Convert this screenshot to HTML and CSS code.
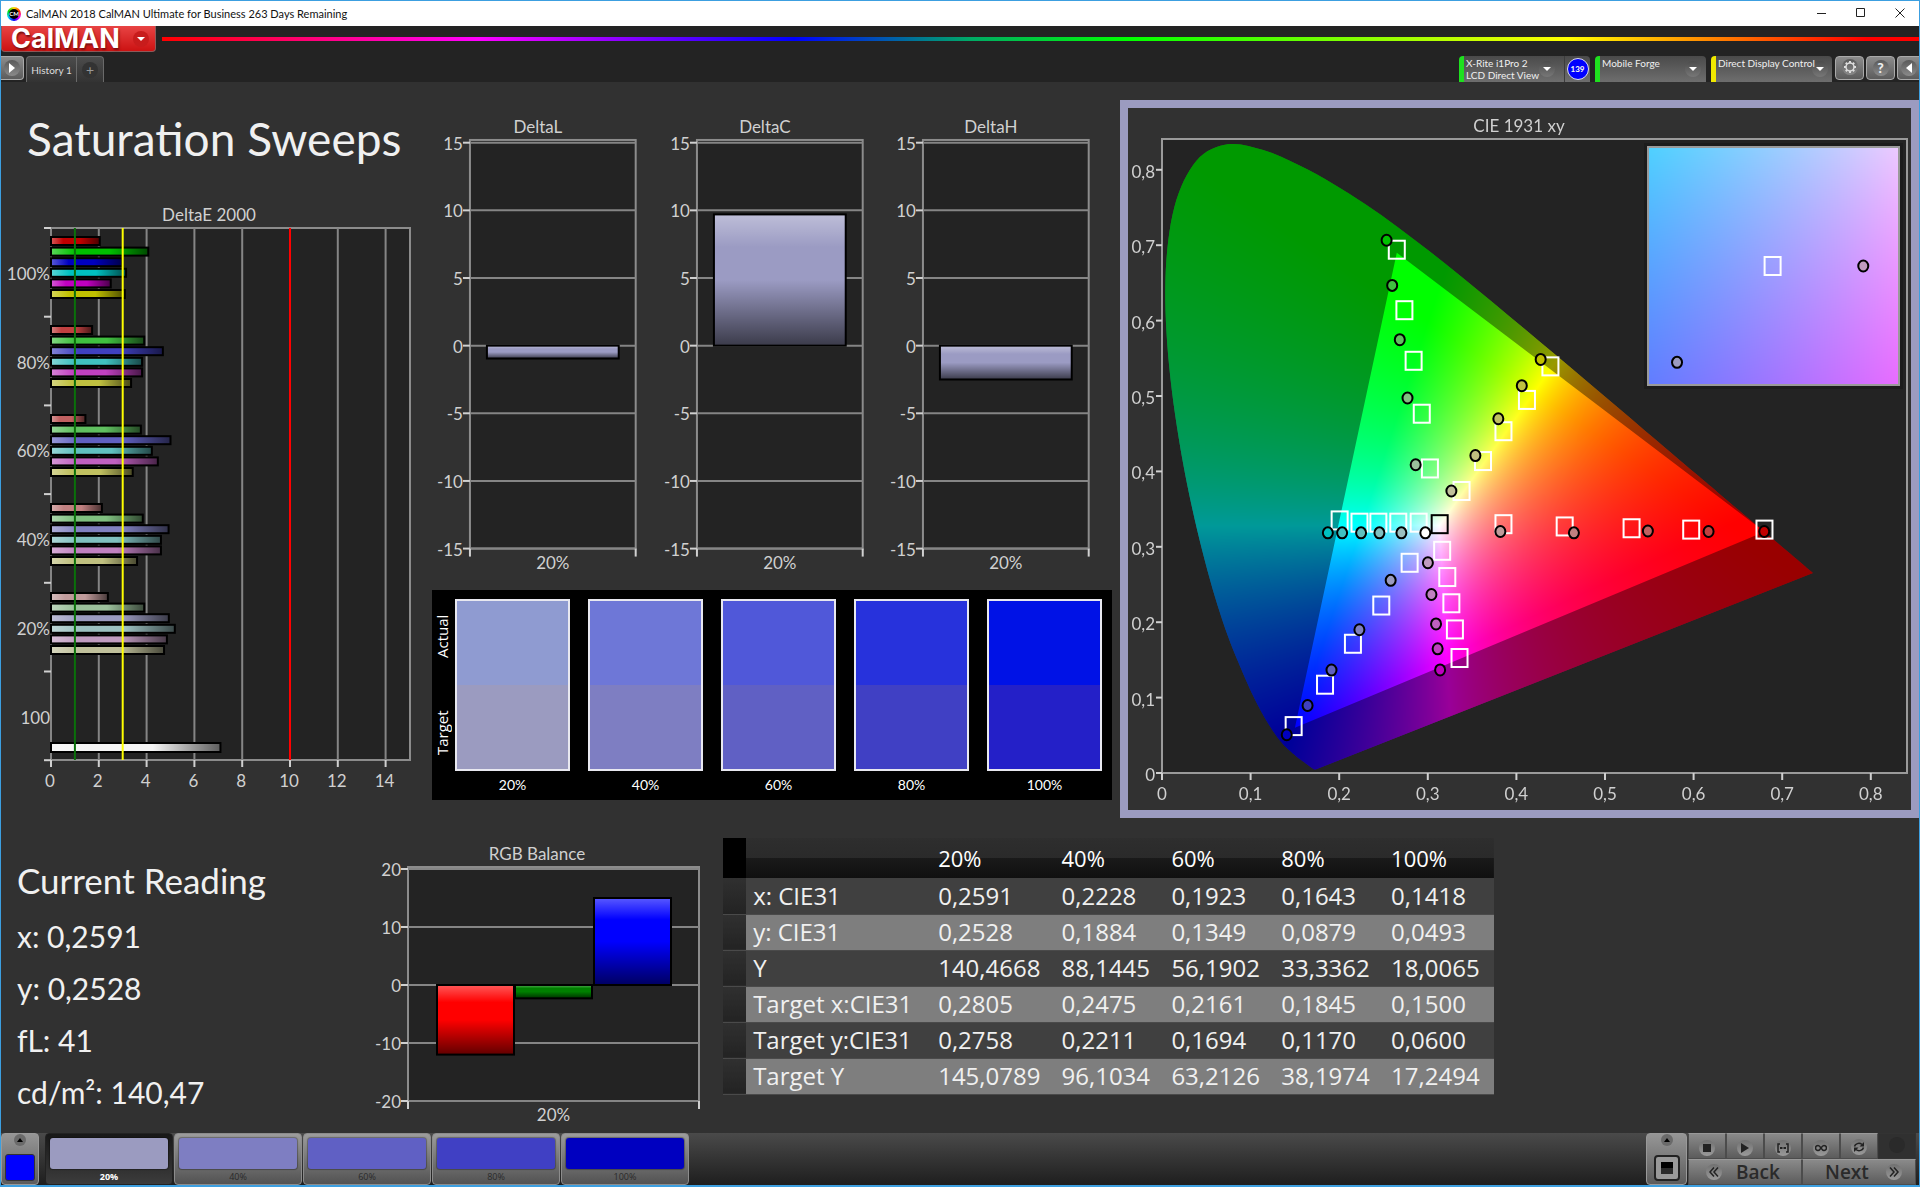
FILE: index.html
```html
<!DOCTYPE html>
<html lang="en">
<head>
  <meta charset="UTF-8" />
  <title>CalMAN 2018 CalMAN Ultimate for Business 263 Days Remaining</title>
  <link rel="stylesheet" href="styles.css">
</head>
<body>
  <!-- Shared bar shading -->
  <svg class="defs" width="0" height="0" aria-hidden="true">
    <defs>
      <linearGradient id="shadeV" x1="0" y1="0" x2="0" y2="1">
        <stop offset="0" stop-color="#fff" stop-opacity="0.35" />
        <stop offset="0.25" stop-color="#fff" stop-opacity="0" />
        <stop offset="0.5" stop-color="#000" stop-opacity="0" />
        <stop offset="1" stop-color="#000" stop-opacity="0.62" />
      </linearGradient>
      <linearGradient id="shadeH" x1="0" y1="0" x2="1" y2="0">
        <stop offset="0" stop-color="#fff" stop-opacity="0.35" />
        <stop offset="0.25" stop-color="#fff" stop-opacity="0" />
        <stop offset="0.6" stop-color="#000" stop-opacity="0" />
        <stop offset="1" stop-color="#000" stop-opacity="0.62" />
      </linearGradient>
    </defs>
  </svg>

  <div class="window">
    <div class="titlebar">
      <span class="app-icon"><span>CM</span></span>
      <span class="app-title">CalMAN 2018 CalMAN Ultimate for Business 263 Days Remaining</span>
      <div class="window-buttons">
        <button type="button" aria-label="Minimize"><svg width="10" height="10" viewBox="0 0 10 10"><path d="M0 5.5h9" /></svg></button>
        <button type="button" aria-label="Maximize"><svg width="10" height="10" viewBox="0 0 10 10"><path d="M0.5 0.5h8v8h-8z" /></svg></button>
        <button type="button" aria-label="Close"><svg width="10" height="10" viewBox="0 0 10 10"><path d="M0.5 0.5l9 9M9.5 0.5l-9 9" /></svg></button>
      </div>
    </div>

    <header class="toolbar">
      <div class="brand-row">
        <button type="button" class="brand">CalMAN <span class="knob"><svg width="8" height="4" viewBox="0 0 8 4"><path d="M0 0h8L4 4z" /></svg></span></button>
        <div class="rainbow"></div>
      </div>
      <div class="tab-row">
        <button type="button" class="key key-start" aria-label="Show panel"><span class="knob"><svg width="6" height="10" viewBox="0 0 6 10"><path d="M0 0l6 5-6 5z" /></svg></span></button>
        <div class="tabs">
          <button type="button" class="tab">History 1</button>
          <button type="button" class="tab tab-add" aria-label="Add history"><span class="knob">+</span></button>
        </div>
        <div class="devices">
          <div class="device device-meter ok">
            <button type="button" class="device-name">X-Rite i1Pro 2<br>LCD Direct View</button>
            <span class="knob"><svg width="8" height="4" viewBox="0 0 8 4"><path d="M0 0h8L4 4z" /></svg></span>
            <span class="badge-cell"><span class="badge">139</span></span>
          </div>
          <div class="device device-source ok">
            <select aria-label="Source"><option>Mobile Forge</option></select>
            <span class="knob"><svg width="8" height="4" viewBox="0 0 8 4"><path d="M0 0h8L4 4z" /></svg></span>
          </div>
          <div class="device device-display warn">
            <select aria-label="Display"><option>Direct Display Control</option></select>
            <span class="knob"><svg width="8" height="4" viewBox="0 0 8 4"><path d="M0 0h8L4 4z" /></svg></span>
          </div>
          <button type="button" class="key" aria-label="Settings"><span class="knob"><svg width="14" height="14" viewBox="0 0 14 14"><circle cx="7" cy="7" r="4" fill="none" stroke="#ddd" stroke-width="1.5" /><path d="M7 1v2M7 11v2M1 7h2M11 7h2M2.8 2.8l1.4 1.4M9.8 9.8l1.4 1.4M11.2 2.8L9.8 4.2M4.2 9.8l-1.4 1.4" stroke="#ddd" stroke-width="2" /></svg></span></button>
          <button type="button" class="key" aria-label="Help"><span class="knob">?</span></button>
          <button type="button" class="key key-end" aria-label="Collapse"><span class="knob"><svg width="6" height="10" viewBox="0 0 6 10"><path d="M6 0L0 5l6 5z" /></svg></span></button>
        </div>
      </div>
    </header>

    <main>
      <section class="sweeps">
        <div class="col-error">
          <h1>Saturation Sweeps</h1>
          <svg id="deltaE" class="chart" viewBox="0 0 431 600" role="img" aria-label="DeltaE 2000"></svg>
        </div>

        <div class="col-delta">
          <div class="delta-charts">
            <svg id="deltaL" class="chart" viewBox="0 0 227 470" role="img" aria-label="DeltaL"></svg>
            <svg id="deltaC" class="chart" viewBox="0 0 227 470" role="img" aria-label="DeltaC"></svg>
            <svg id="deltaH" class="chart" viewBox="0 0 227 470" role="img" aria-label="DeltaH"></svg>
          </div>
          <div class="swatches">
            <div class="swatch-side"><span>Actual</span><span>Target</span></div>
            <figure><div class="actual a20"></div><div class="target t20"></div><figcaption>20%</figcaption></figure>
            <figure><div class="actual a40"></div><div class="target t40"></div><figcaption>40%</figcaption></figure>
            <figure><div class="actual a60"></div><div class="target t60"></div><figcaption>60%</figcaption></figure>
            <figure><div class="actual a80"></div><div class="target t80"></div><figcaption>80%</figcaption></figure>
            <figure><div class="actual a100"></div><div class="target t100"></div><figcaption>100%</figcaption></figure>
          </div>
        </div>

        <div class="cie">
          <canvas id="cieCanvas" width="783" height="702"></canvas>
          <svg id="cieChart" class="chart" viewBox="0 0 783 702" role="img" aria-label="CIE 1931 xy"></svg>
        </div>
      </section>

      <section class="details">
        <div class="reading">
          <h2>Current Reading</h2>
          <p>x: 0,2591</p>
          <p>y: 0,2528</p>
          <p>fL: 41</p>
          <p>cd/m²: 140,47</p>
        </div>

        <svg id="rgbBalance" class="chart" viewBox="0 0 362 290" role="img" aria-label="RGB Balance"></svg>

        <table>
          <colgroup>
            <col class="c-gutter"><col class="c-name"><col class="c-first"><col><col><col><col>
          </colgroup>
          <thead>
            <tr><td></td><th></th><th>20%</th><th>40%</th><th>60%</th><th>80%</th><th>100%</th></tr>
          </thead>
          <tbody>
            <tr><td></td><th>x: CIE31</th><td>0,2591</td><td>0,2228</td><td>0,1923</td><td>0,1643</td><td>0,1418</td></tr>
            <tr><td></td><th>y: CIE31</th><td>0,2528</td><td>0,1884</td><td>0,1349</td><td>0,0879</td><td>0,0493</td></tr>
            <tr><td></td><th>Y</th><td>140,4668</td><td>88,1445</td><td>56,1902</td><td>33,3362</td><td>18,0065</td></tr>
            <tr><td></td><th>Target x:CIE31</th><td>0,2805</td><td>0,2475</td><td>0,2161</td><td>0,1845</td><td>0,1500</td></tr>
            <tr><td></td><th>Target y:CIE31</th><td>0,2758</td><td>0,2211</td><td>0,1694</td><td>0,1170</td><td>0,0600</td></tr>
            <tr><td></td><th>Target Y</th><td>145,0789</td><td>96,1034</td><td>63,2126</td><td>38,1974</td><td>17,2494</td></tr>
          </tbody>
        </table>
      </section>
    </main>

    <footer class="patternbar">
      <button type="button" class="mini" aria-label="Current pattern">
        <span class="mini-knob"><svg width="6" height="4" viewBox="0 0 6 4"><path d="M0 4h6L3 0z" /></svg></span>
        <span class="mini-color"></span>
      </button>
      <div class="patterns">
        <button type="button" class="pattern selected"><span class="t20"></span>20%</button>
        <button type="button" class="pattern"><span class="t40"></span>40%</button>
        <button type="button" class="pattern"><span class="t60"></span>60%</button>
        <button type="button" class="pattern"><span class="t80"></span>80%</button>
        <button type="button" class="pattern"><span class="p100"></span>100%</button>
      </div>

      <button type="button" class="mini mini-stop" aria-label="Pattern window">
        <span class="mini-knob"><svg width="6" height="4" viewBox="0 0 6 4"><path d="M0 4h6L3 0z" /></svg></span>
        <span class="stop-frame"><span></span></span>
      </button>
      <div class="controls">
        <button type="button" aria-label="Stop"><span class="knob"><svg width="8" height="8" viewBox="0 0 8 8"><path d="M0 0h8v8H0z" /></svg></span></button>
        <button type="button" aria-label="Read"><span class="knob"><svg width="8" height="10" viewBox="0 0 8 10"><path d="M0 0l8 5-8 5z" /></svg></span></button>
        <button type="button" aria-label="Read series"><span class="knob"><svg width="12" height="10" viewBox="0 0 12 10"><path class="line" d="M3 1H1v8h2M9 1h2v8H9" /><path d="M3 4h2v2H3zM5.5 4h1v2h-1zM7 4h2v2H7z" /></svg></span></button>
        <button type="button" aria-label="Continuous"><span class="knob"><svg width="12" height="8" viewBox="0 0 12 8"><path class="line" d="M6 4C5 2.5 4.2 1.5 3 1.5a2.5 2.5 0 0 0 0 5C4.2 6.5 5 5.5 6 4s1.8-2.5 3-2.5a2.5 2.5 0 0 1 0 5C7.8 6.5 7 5.5 6 4z" /></svg></span></button>
        <button type="button" aria-label="Refresh"><span class="knob"><svg width="12" height="12" viewBox="0 0 12 12"><path class="line" d="M1.5 5.5C2 3 6 1 9 3.5M10.5 6.5C10 9 6 11 3 8.5" /><path d="M11 1v4.5H6.5zM1 11V6.5h4.5z" /></svg></span></button>
        <button type="button" class="off" aria-label="Disabled" disabled><span class="knob"></span></button>
        <button type="button" class="wide"><span class="knob"><svg width="10" height="10" viewBox="0 0 10 10"><path class="line" d="M5 0.5L1 5l4 4.5M9 0.5L5 5l4 4.5" /></svg></span>Back</button>
        <button type="button" class="wide wide-next">Next<span class="knob"><svg width="10" height="10" viewBox="0 0 10 10"><path class="line" d="M1 0.5L5 5 1 9.5M5 0.5L9 5 5 9.5" /></svg></span></button>
      </div>
    </footer>
  </div>

  <script>
    const SVG_NS = 'http://www.w3.org/2000/svg';

    function add(parent, tag, attrs, text) {
      const el = document.createElementNS(SVG_NS, tag);
      for (const key in attrs) el.setAttribute(key, attrs[key]);
      if (text !== undefined) el.textContent = text;
      parent.appendChild(el);
      return el;
    }

    function line(svg, x1, y1, x2, y2, cls) {
      add(svg, 'line', { x1, y1, x2, y2, class: cls });
    }

    function bar(svg, x, y, width, height, color, shade) {
      add(svg, 'rect', { x, y, width, height, fill: color });
      add(svg, 'rect', { x, y, width, height, fill: `url(#${shade})`, class: 'bar-edge' });
    }

    // Vertical bar chart with horizontal grid lines
    function columnChart(id, o) {
      const svg = document.getElementById(id);
      const y = v => o.zero - v * o.unit;
      const bottom = y(-o.max);
      add(svg, 'rect', { x: o.left, y: o.top, width: o.right - o.left, height: bottom - o.top, class: 'plot' });
      for (let v = -o.max; v <= o.max; v += o.step) {
        line(svg, o.left, y(v), o.right, y(v), 'grid');
        line(svg, o.left - 7, y(v), o.left, y(v), 'tick');
        add(svg, 'text', { x: o.left - 7, y: y(v) + 7, class: 'end' }, v);
      }
      line(svg, o.left, bottom, o.left, bottom + 8, 'tick');
      line(svg, o.right, bottom, o.right, bottom + 8, 'tick');
      o.bars.forEach(b => {
        const top = Math.min(y(b.value), o.zero);
        bar(svg, b.x, top, b.width, Math.abs(b.value * o.unit), b.color, 'shadeV');
      });
      add(svg, 'text', { x: o.titleX, y: 22 }, o.title);
      add(svg, 'text', { x: (o.left + o.right) / 2, y: bottom + 20 }, '20%');
    }

    const delta = { left: 38, right: 204, top: 29, zero: 235, unit: 13.55, max: 15, step: 5, titleX: 106 };
    [['DeltaL', -0.95], ['DeltaC', 9.7], ['DeltaH', -2.5]].forEach(([title, value]) => {
      const id = title.replace('Delta', 'delta');
      columnChart(id, { ...delta, title, bars: [{ x: 55, width: 132, value, color: '#9b9bc3' }] });
    });

    columnChart('rgbBalance', {
      left: 47, right: 338, top: 29, zero: 147, unit: 5.8, max: 20, step: 10, titleX: 176, title: 'RGB Balance',
      bars: [
        { x: 76, width: 77, value: -12, color: '#ff0000' },
        { x: 154, width: 77, value: -2.3, color: '#008000' },
        { x: 233, width: 77, value: 15, color: '#0000ff' }
      ]
    });

    // Colours of the six sweeps at each saturation level
    const LOW = { 100: 0, 80: 64, 60: 96, 40: 128, 20: 155 };
    function sweepColor(name, level) {
      const hi = 192, lo = LOW[level];
      const mask = { red: [1, 0, 0], green: [0, 1, 0], blue: [0, 0, 1], cyan: [0, 1, 1], magenta: [1, 0, 1], yellow: [1, 1, 0] }[name];
      return `rgb(${mask.map(m => (m ? hi : lo)).join(',')})`;
    }

    // DeltaE 2000
    const NAMES = ['red', 'green', 'blue', 'cyan', 'magenta', 'yellow'];
    const errors = [
      [100, [2.04, 4.07, 2.98, 3.14, 2.5, 3.09]],
      [80, [1.72, 3.9, 4.68, 3.81, 3.81, 3.35]],
      [60, [1.44, 3.76, 5, 4.22, 4.47, 3.42]],
      [40, [2.13, 3.84, 4.92, 4.6, 4.6, 3.6]],
      [20, [2.38, 3.9, 4.93, 5.18, 4.85, 4.73]]
    ];
    const de = document.getElementById('deltaE');
    const deTop = 28, deBottom = 560, deRow = 88.7;
    const deX = v => 50 + v * 23.9;
    add(de, 'rect', { x: 50, y: deTop, width: 359, height: deBottom - deTop, class: 'plot' });
    for (let v = 0; v <= 14; v += 2) {
      line(de, deX(v), deTop, deX(v), deBottom, 'grid');
      line(de, deX(v), deBottom, deX(v), deBottom + 7, 'tick');
      add(de, 'text', { x: deX(v) - 1, y: deBottom + 27 }, v);
    }
    for (let i = 0; i <= 6; i++) line(de, 43, deTop + i * deRow, 50, deTop + i * deRow, 'tick');
    errors.forEach(([level, values], row) => {
      const top = deTop + 9 + row * 89;
      values.forEach((v, i) => bar(de, 50, top + i * 10.6, v * 23.9, 8, sweepColor(NAMES[i], level), 'shadeH'));
      add(de, 'text', { x: 49, y: 80 + row * deRow, class: 'end' }, level + '%');
    });
    bar(de, 50, 543, 7.09 * 23.9, 9, '#f4f4f4', 'shadeH');
    add(de, 'text', { x: 49, y: 524, class: 'end' }, '100');
    line(de, deX(1), deTop, deX(1), deBottom, 'limit-good');
    line(de, deX(3), deTop, deX(3), deBottom, 'limit-warn');
    line(de, deX(10), deTop, deX(10), deBottom, 'limit-bad');
    add(de, 'text', { x: 208, y: 21 }, 'DeltaE 2000');

    // CIE 1931 diagram
    const cx = x => 34 + x * 886;
    const cy = y => 665 - y * 754;
    const inset = { x: 520, y: 39, w: 251, h: 238, x0: 0.2524, x1: 0.3086, y0: 0.2474, y1: 0.3042 };
    const ix = x => inset.x + (x - inset.x0) / (inset.x1 - inset.x0) * inset.w;
    const iy = y => inset.y + (inset.y1 - y) / (inset.y1 - inset.y0) * inset.h;

    const LOCUS = [
      [.1741, .0050], [.1733, .0048], [.1714, .0051], [.1689, .0069], [.1644, .0109], [.1566, .0177], [.1510, .0227],
      [.1440, .0297], [.1355, .0399], [.1241, .0578], [.1096, .0868], [.0913, .1327], [.0687, .2007], [.0454, .2950],
      [.0235, .4127], [.0082, .5384], [.0039, .6548], [.0139, .7502], [.0389, .8120], [.0743, .8338], [.1142, .8262],
      [.1547, .8059], [.1929, .7816], [.2296, .7543], [.2658, .7243], [.3016, .6923], [.3373, .6589], [.3731, .6245],
      [.4087, .5896], [.4441, .5547], [.4788, .5202], [.5125, .4866], [.5448, .4544], [.5752, .4242], [.6029, .3965],
      [.6270, .3725], [.6658, .3340], [.6915, .3083], [.7140, .2859], [.7347, .2653]
    ];
    const GAMUT = [[.68, .32], [.265, .69], [.15, .06]];

    function xyToRgb(x, y) {
      const X = x / y, Z = (1 - x - y) / y;
      const rgb = [
        3.2406 * X - 1.5372 - 0.4986 * Z,
        -0.9689 * X + 1.8758 + 0.0415 * Z,
        0.0557 * X - 0.2040 + 1.0570 * Z
      ].map(c => Math.max(c, 0));
      const max = Math.max(...rgb);
      return rgb.map(c => c / max * 255);
    }

    // Canvas filled with the chromaticity colour of every pixel
    function colorField(width, height, toX, toY) {
      const canvas = document.createElement('canvas');
      canvas.width = width;
      canvas.height = height;
      const c = canvas.getContext('2d');
      const img = c.createImageData(width, height);
      for (let j = 0; j < height; j++) {
        for (let i = 0; i < width; i++) {
          const [r, g, b] = xyToRgb(toX(i), Math.max(toY(j), 0.001));
          img.data.set([r, g, b, 255], (j * width + i) * 4);
        }
      }
      c.putImageData(img, 0, 0);
      return canvas;
    }

    const ctx = document.getElementById('cieCanvas').getContext('2d');
    ctx.fillStyle = '#232323';
    ctx.fillRect(34, 31, 745, 634);

    // Smooth curve through the locus points
    const locus = new Path2D();
    locus.moveTo(cx(LOCUS[0][0]), cy(LOCUS[0][1]));
    for (let i = 0; i < LOCUS.length - 1; i++) {
      const p1 = LOCUS[i], p2 = LOCUS[i + 1];
      const p0 = LOCUS[i - 1] || p1, p3 = LOCUS[i + 2] || p2;
      locus.bezierCurveTo(
        cx(p1[0] + (p2[0] - p0[0]) / 6), cy(p1[1] + (p2[1] - p0[1]) / 6),
        cx(p2[0] - (p3[0] - p1[0]) / 6), cy(p2[1] - (p3[1] - p1[1]) / 6),
        cx(p2[0]), cy(p2[1]));
    }
    locus.closePath();

    // Darken everything outside the display gamut
    const outside = new Path2D();
    outside.rect(0, 0, 783, 702);
    GAMUT.forEach(([x, y], i) => (i ? outside.lineTo(cx(x), cy(y)) : outside.moveTo(cx(x), cy(y))));
    outside.closePath();

    ctx.save();
    ctx.clip(locus);
    ctx.drawImage(colorField(745, 634, i => i / 886, j => (634 - j) / 754), 34, 31);
    ctx.fillStyle = 'rgba(0, 0, 0, 0.4)';
    ctx.fill(outside, 'evenodd');
    ctx.restore();

    ctx.fillStyle = '#1c1c1c';
    ctx.fillRect(inset.x - 4, inset.y - 4, inset.w + 8, inset.h + 8);
    ctx.drawImage(colorField(inset.w, inset.h,
      i => inset.x0 + i / inset.w * (inset.x1 - inset.x0),
      j => inset.y1 - j / inset.h * (inset.y1 - inset.y0)), inset.x, inset.y);

    const cie = document.getElementById('cieChart');
    add(cie, 'rect', { x: 34, y: 31, width: 745, height: 634, class: 'frame' });
    add(cie, 'rect', { x: inset.x, y: inset.y, width: inset.w, height: inset.h, class: 'frame' });
    add(cie, 'text', { x: 391, y: 24 }, 'CIE 1931 xy');
    for (let i = 0; i <= 8; i++) {
      const label = i ? '0,' + i : '0';
      line(cie, cx(i / 10), 665, cx(i / 10), 672, 'tick');
      line(cie, 28, cy(i / 10), 34, cy(i / 10), 'tick');
      add(cie, 'text', { x: cx(i / 10), y: 692 }, label);
      add(cie, 'text', { x: 27, y: cy(i / 10) + 8, class: 'end' }, label);
    }

    const TARGETS = [
      [.265, .694], [.2736, .6138], [.284, .5467], [.2932, .4765], [.3024, .4039],
      [.4384, .5393], [.4119, .4948], [.3854, .4533], [.3623, .4137], [.3381, .374],
      [.2005, .335], [.2229, .332], [.2442, .332], [.2667, .332], [.2897, .332],
      [.3854, .33], [.4545, .327], [.53, .3246], [.5973, .3228], [.68, .3228],
      [.3162, .2947], [.322, .2599], [.3266, .2251], [.3306, .1904], [.3358, .1525],
      [.2795, .2788], [.2475, .2221], [.2155, .1714], [.184, .1171], [.1486, .0622]
    ];
    // Measured points, from 100% down to 20%
    const MEASURED = {
      green: [[.2535, .7065], [.2598, .6467], [.2684, .5747], [.2771, .4973], [.2863, .4088]],
      yellow: [[.4274, .5485], [.4061, .5137], [.3796, .4698], [.3537, .421], [.3266, .374]],
      cyan: [[.1872, .3185], [.2033, .3185], [.2247, .3185], [.2454, .3185], [.2702, .3185]],
      red: [[.6797, .3203], [.6169, .3203], [.5484, .3209], [.4649, .3185], [.3819, .3203]],
      magenta: [[.3139, .1367], [.3111, .1647], [.3093, .1977], [.3041, .2367], [.3001, .2788]],
      blue: [[.1408, .0508], [.1643, .0895], [.1913, .1365], [.2228, .19], [.2581, .2555]]
    };

    function target(x, y, cls) {
      add(cie, 'rect', { x: x - 8, y: y - 9, width: 16, height: 18, class: cls });
    }
    function dot(x, y, fill) {
      add(cie, 'ellipse', { cx: x, cy: y, rx: 5, ry: 5.5, fill, class: 'dot' });
    }

    TARGETS.forEach(([x, y]) => target(cx(x), cy(y), 'target-box'));
    target(cx(.3134), cy(.33), 'target-box white-point');
    dot(cx(.2972), cy(.3185), '#fff');
    for (const name in MEASURED) {
      MEASURED[name].forEach(([x, y], i) => dot(cx(x), cy(y), sweepColor(name, 100 - i * 20)));
    }
    target(ix(.2803), iy(.2758), 'target-box');
    dot(ix(.2589), iy(.2528), sweepColor('blue', 20));
    dot(ix(.3006), iy(.2758), sweepColor('magenta', 20));
  </script>
</body>
</html>
```
FILE: styles.css
```css
* {
  box-sizing: border-box;
}

body {
  margin: 0;
  background: #313131;
  color: #f0f0f0;
  font-family: Lato, "Open Sans", sans-serif;
}

button,
select {
  margin: 0;
  padding: 0;
  border: 0;
  background: none;
  color: inherit;
  font: inherit;
}

.defs {
  position: absolute;
}

.window {
  display: flex;
  flex-direction: column;
  min-height: 100vh;
  border: 1px solid #3c9fe0;
  border-bottom-width: 2px;
  overflow: hidden;
}

/* Title bar */
.titlebar {
  display: flex;
  align-items: center;
  height: 25px;
  padding-left: 6px;
  background: #fff;
  color: #111;
  font-size: 11px;
}

.app-icon {
  display: flex;
  align-items: center;
  justify-content: center;
  width: 14px;
  height: 14px;
  margin-right: 5px;
  border-radius: 50%;
  background: conic-gradient(#fd0, #f30, #f0f, #00f, #0cf, #0d0, #fd0);
}

.app-icon span {
  width: 10px;
  border-radius: 50%;
  background: #000;
  color: #fff;
  font-size: 6px;
  font-weight: 700;
  line-height: 10px;
  text-align: center;
}

.window-buttons {
  display: flex;
  margin-left: auto;
}

.window-buttons button {
  width: 39px;
  height: 24px;
}

.window-buttons path {
  fill: none;
  stroke: #222;
}

/* Toolbar */
.toolbar {
  height: 56px;
  background: #232323;
}

.brand-row {
  display: flex;
  align-items: center;
  height: 26px;
  gap: 6px;
}

.brand {
  display: flex;
  align-items: center;
  justify-content: space-between;
  width: 155px;
  height: 26px;
  padding: 0 6px 0 9px;
  border: 1px solid #8d5a5a;
  border-top: 0;
  border-radius: 0 0 4px 4px;
  background: linear-gradient(#e84444, #cc1212);
  color: #fff;
  font-family: Inter, sans-serif;
  font-size: 27px;
  font-weight: 700;
  line-height: 24px;
  text-shadow: 1px 2px 2px #7a0f0f;
}

.rainbow {
  flex: 1;
  height: 4px;
  background: linear-gradient(90deg, #f00, #f0f 18%, #00f 36%, #0a6 46%, #0f0 55%, #ff0 80%, #f80 88%, #f00 97%);
}

.knob {
  display: inline-flex;
  flex: none;
  align-items: center;
  justify-content: center;
  width: 16px;
  height: 16px;
  border-radius: 50%;
  background: linear-gradient(#4c4c4c, #777);
  color: #eee;
  pointer-events: none;
}

.knob path {
  fill: #fff;
}

.brand .knob {
  background: #c81c1c;
}

.tab-row {
  display: flex;
  height: 30px;
  padding-top: 4px;
}

.key {
  width: 29px;
  height: 24px;
  margin-right: 2px;
  border: 1px solid #aaa;
  border-radius: 4px;
  background: linear-gradient(#8c8c8c, #5c5c5c);
  font-size: 14px;
  font-weight: 900;
  line-height: 16px;
}

.key .knob {
  background: linear-gradient(#5a5a5a, #8a8a8a);
}

.key-start {
  width: 23px;
  border-left: 0;
  border-radius: 0 4px 4px 0;
}

.key-end {
  width: 22px;
  margin-right: 0;
  border-right: 0;
  border-radius: 4px 0 0 4px;
}

.tabs {
  display: flex;
  height: 26px;
  border: 1px solid #6a6a6a;
  border-bottom: 0;
  border-radius: 4px 4px 0 0;
  background: linear-gradient(#4c4c4c, #333);
}

.tab {
  width: 49px;
  color: #ddd;
  font-size: 10px;
  white-space: nowrap;
}

.tab-add {
  width: 27px;
  border-left: 1px solid #6a6a6a;
  font-size: 14px;
  line-height: 14px;
}

.tab-add .knob {
  background: #333;
  color: #999;
}

.devices {
  display: flex;
  margin-left: auto;
}

.device {
  display: flex;
  align-items: center;
  height: 26px;
  margin-right: 5px;
  padding-left: 2px;
  border-left: 5px solid #1fe01f;
  border-radius: 4px 4px 0 0;
  background: linear-gradient(#4a4a4a, #6e6e6e);
  font-size: 10px;
  line-height: 12px;
}

.device.warn {
  margin-right: 3px;
  border-left-color: #f0e800;
}

.device-meter {
  width: 131px;
}

.device-source {
  width: 111px;
}

.device-display {
  width: 121px;
}

.device-name {
  flex: 1;
  text-align: left;
  white-space: nowrap;
}

.device select {
  flex: 1;
  align-self: flex-start;
  min-width: 0;
  height: 26px;
  padding-bottom: 12px;
  appearance: none;
}

.device > .knob {
  margin-right: 9px;
}

.device-source > .knob {
  margin-right: 5px;
}

/* The long name runs over the edge of its arrow */
.device-display select {
  position: relative;
  z-index: 1;
}

.device-display > .knob {
  margin-right: 4px;
  margin-left: -16px;
}

.badge-cell {
  display: flex;
  align-items: center;
  justify-content: center;
  width: 30px;
  height: 26px;
  border-left: 1px solid #3c3c3c;
}

.badge {
  width: 22px;
  border: 1px solid #dde;
  border-radius: 50%;
  background: #00f;
  font-size: 8px;
  font-weight: 900;
  line-height: 20px;
  text-align: center;
}

/* Charts */
.chart {
  display: block;
  width: 100%;
  overflow: visible;
  font-size: 17px;
}

.chart text {
  fill: #d0d0d0;
  text-anchor: middle;
}

.chart text.end {
  text-anchor: end;
}

.plot {
  fill: #232323;
  stroke: #8c8c8c;
  stroke-width: 2;
}

.frame {
  fill: none;
  stroke: #9a9a9a;
  stroke-width: 2;
}

.grid {
  stroke: #858585;
  stroke-width: 2;
}

.tick {
  stroke: #d0d0d0;
  stroke-width: 2;
}

.bar-edge {
  stroke: #000;
  stroke-width: 2;
}

.limit-good,
.limit-warn,
.limit-bad {
  stroke: #0a700a;
  stroke-width: 2;
}

.limit-warn {
  stroke: #ff0;
}

.limit-bad {
  stroke: #f00;
}

.target-box {
  fill: none;
  stroke: #fff;
  stroke-width: 2;
}

.white-point {
  stroke: #000;
}

.dot {
  stroke: #000;
  stroke-width: 2;
}

/* Upper area */
main {
  flex: 1;
}

.sweeps {
  display: grid;
  grid-template-columns: 431fr 688fr 799fr;
  align-items: start;
  padding-top: 18px;
}

.sweeps > div {
  min-width: 0;
}

h1 {
  height: 100px;
  margin: 0;
  padding: 7px 0 0 26px;
  font-size: 46px;
  font-weight: 400;
  line-height: 64px;
  white-space: nowrap;
}

.col-delta {
  padding: 11px 8px 0 0;
}

.delta-charts {
  display: grid;
  grid-template-columns: repeat(3, 1fr);
}

.swatches {
  display: flex;
  gap: 18px;
  height: 210px;
  margin-top: 10px;
  padding: 9px 10px 0 2px;
  background: #000;
}

.swatch-side {
  display: flex;
  flex-direction: row-reverse;
  justify-content: space-between;
  width: 21px;
  height: 172px;
  margin-right: -18px;
  padding: 16px 0;
  color: #fff;
  font-family: "Open Sans", sans-serif;
  font-size: 15px;
  line-height: 16px;
  writing-mode: vertical-rl;
  transform: rotate(180deg);
}

.swatches figure {
  flex: 1;
  margin: 0;
}

.actual,
.target {
  height: 86px;
  border: 2px solid #e8e8f0;
}

.actual {
  border-bottom: 0;
}

.target {
  border-top: 0;
}

.swatches figcaption {
  color: #fff;
  font-size: 14px;
  line-height: 28px;
  text-align: center;
}

.a20 { background: #8f9bd1; }
.a40 { background: #6e77d7; }
.a60 { background: #5058d9; }
.a80 { background: #2732dc; }
.a100 { background: #0012e6; }
.t20 { background: #9b9bc0; }
.t40 { background: #7e7ec2; }
.t60 { background: #6060c4; }
.t80 { background: #4040c4; }
.t100 { background: #2420c8; }
.p100 { background: #0000c0; }

.cie {
  display: grid;
  border: 8px solid #9b9bc0;
}

.cie canvas,
.cie svg {
  grid-area: 1 / 1;
  width: 100%;
}

/* Lower area */
.details {
  display: grid;
  grid-template-columns: 360fr 362fr 771fr 425fr;
  align-items: start;
  padding-top: 20px;
}

.reading {
  padding: 14px 0 0 16px;
  white-space: nowrap;
}

h2 {
  margin: 0 0 2px;
  font-size: 35px;
  font-weight: 400;
  line-height: 56px;
}

.reading p {
  margin: 0;
  font-size: 30px;
  line-height: 52px;
}

table {
  width: 100%;
  border-collapse: collapse;
  table-layout: fixed;
  font-family: "Open Sans", sans-serif;
  font-size: 24px;
  line-height: 34px;
}

.c-gutter {
  width: 3%;
}

.c-name {
  width: 24%;
}

.c-first {
  width: 16%;
}

th,
td {
  height: 36px;
  padding: 0 0 0 7px;
  font-weight: 400;
  text-align: left;
  white-space: nowrap;
}

tbody tr {
  border-bottom: 1px solid #4a4a4a;
  background: #404040;
}

tbody tr:nth-child(even) {
  background: #7e7e7e;
}

thead tr {
  background: linear-gradient(#2e2e2e, #2a2a2a 50%, #1a1a1a 50%, #101010);
}

thead th {
  height: 40px;
  color: #fff;
  font-size: 22px;
}

thead td:first-child {
  background: #000;
}

tbody td:first-child {
  background: linear-gradient(#303030, #232323);
}

/* Pattern bar */
.patternbar {
  display: flex;
  height: 52px;
  background: linear-gradient(#4a4a4a, #1e1e1e);
  color: #2a2a2a;
}

.mini {
  display: flex;
  flex-direction: column;
  align-items: center;
  justify-content: space-between;
  width: 38px;
  height: 52px;
  margin-right: 6px;
  padding-bottom: 3px;
  border: 1px solid #999;
  border-radius: 4px;
  background: linear-gradient(#969696, #5c5c5c);
}

.mini-knob {
  display: flex;
  align-items: center;
  justify-content: center;
  width: 12px;
  height: 12px;
  border-radius: 50%;
  background: #6a6a6a;
}

.mini-color {
  width: 30px;
  height: 27px;
  border: 1px solid #333;
  border-radius: 3px;
  background: #00f;
}

.patterns {
  display: flex;
  gap: 1px;
}

.pattern {
  display: flex;
  flex-direction: column;
  align-items: center;
  width: 128px;
  padding: 4px;
  border: 1px solid #8c8c8c;
  border-radius: 4px;
  background: linear-gradient(#9c9c9c, #525252);
  font-family: "Open Sans", sans-serif;
  font-size: 9px;
  line-height: 16px;
}

.pattern span {
  flex: none;
  width: 118px;
  height: 31px;
  border-radius: 3px;
  box-shadow: 0 0 1px 1px rgba(0, 0, 0, 0.3);
}

.pattern.selected {
  border-color: #222;
  background: linear-gradient(#181818, #3c3c3c);
  color: #fff;
  font-weight: 700;
}

.mini-stop {
  width: 41px;
  margin: 0 1px 0 auto;
}

.stop-frame {
  display: flex;
  align-items: center;
  justify-content: center;
  width: 26px;
  height: 26px;
  border: 2px solid #222;
  border-radius: 4px;
  background: #999;
}

.stop-frame span {
  width: 12px;
  height: 12px;
  background: linear-gradient(#000 50%, #2a2a2a 50%);
}

.controls {
  display: grid;
  grid-template-columns: repeat(6, 38px);
  grid-template-rows: 26px 26px;
  margin-right: 3px;
}

.controls button {
  border: 1px solid #4c4c4c;
  border-top-color: #999;
  background: linear-gradient(#8a8a8a, #5c5c5c);
}

.controls .knob {
  background: linear-gradient(#707070, #9a9a9a);
}

.controls .knob path {
  fill: #222;
}

.controls .knob path.line {
  fill: none;
  stroke: #222;
  stroke-width: 1.5;
}

.controls .off {
  border-color: #333;
  background: #303030;
}

.controls .off .knob {
  background: #2a2a2a;
}

.controls .wide {
  display: flex;
  grid-column: span 3;
  align-items: center;
  padding-left: 17px;
  gap: 14px;
  font-family: "Open Sans", sans-serif;
  font-size: 19px;
  font-weight: 600;
  line-height: 22px;
}

.controls .wide-next {
  padding-left: 22px;
  gap: 17px;
}
```
